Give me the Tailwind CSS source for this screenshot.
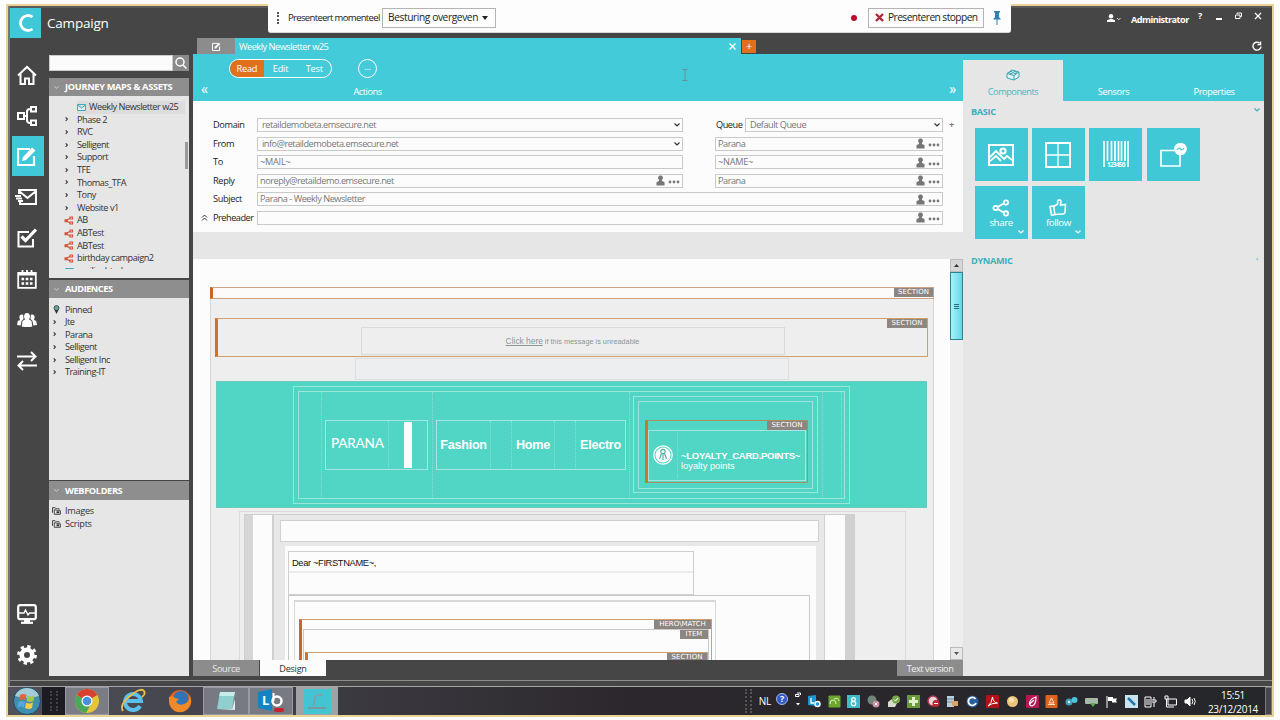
<!DOCTYPE html>
<html lang="en">
<head>
    <meta charset="UTF-8">
    <meta name="viewport" content="width=device-width, initial-scale=1.0">
    <title>Campaign</title>
    <script src="https://cdn.jsdelivr.net/npm/@tailwindcss/browser@4"></script>
</head>
<body class="relative w-[1280px] h-[720px] overflow-hidden bg-[#fdfdfd] pl-[6px] pt-[4px] font-['Open_Sans',sans-serif] text-[9.200px] tracking-[-0.480px] leading-none text-[#333] whitespace-nowrap">

    <!-- Shared icons -->
    <svg class="hidden">
        <symbol id="share" viewBox="0 0 20 20"><g fill="none" stroke="currentColor" stroke-width="2"><path d="M6 9 13 5M6 11l7 4"/><circle cx="4" cy="10" r="2.400"/><circle cx="15.500" cy="4" r="2.400"/><circle cx="15.500" cy="16" r="2.400"/></g></symbol>
        <symbol id="branch" viewBox="0 0 20 20"><path d="M0 7h7v7H0zM11 1h8v7h-8zM11 12h8v7h-8z" fill="currentColor"/><path d="M5 9l8-4M5 11l8 5" stroke="currentColor" stroke-width="2.500"/><path d="M13.500 3.500h3v2h-3zM13.500 14.500h3v2h-3z" fill="#e6e6e6"/></symbol>
        <symbol id="pencil" viewBox="0 0 20 20"><path d="M13 3H1v16h16V10" fill="none" stroke="currentColor" stroke-width="2.200"/><path d="M5 15l1-4L15 1.500l3.500 3L9 14z" fill="currentColor"/></symbol>
        <symbol id="person" viewBox="0 0 10 11"><path d="M5 0a2.600 2.600 0 0 1 1.800 4.600l-.3 1.200L9.500 7.500V11H.5V7.500L3.500 5.800 3.200 4.600A2.600 2.600 0 0 1 5 0z" fill="currentColor"/></symbol>
        <symbol id="dots" viewBox="0 0 12 4"><g fill="currentColor"><circle cx="2" cy="2" r="1.400"/><circle cx="6" cy="2" r="1.400"/><circle cx="10" cy="2" r="1.400"/></g></symbol>
        <symbol id="down" viewBox="0 0 8 6"><path d="M1.500 1.500 4 4l2.500-2.500" fill="none" stroke="currentColor" stroke-width="1.200"/></symbol>
        <symbol id="right" viewBox="0 0 6 8"><path d="M1.500 1.500 3.500 3.500 1.500 5.500" fill="none" stroke="currentColor" stroke-width="1.200"/></symbol>
        <symbol id="folder" viewBox="0 0 10 9"><path d="M.5 6.500V.8h3l1 1.200h3.500v1M2.500 8.200V3.200h2.200l.8 1H9.300v4z" fill="none" stroke="currentColor"/><path d="M5 5h3v2H5z" fill="currentColor"/></symbol>
    </svg>

    <!-- Shared screen -->
    <div class="w-[1268px] h-[713px] border-2 border-[#e8d494] flex flex-col overflow-hidden">

        <!-- Application window -->
        <div class="h-[680px] bg-[#464646] border-l-2 border-[#74757c] flex flex-col">
            <!-- Title bar -->
            <div class="h-8 flex shrink-0 border-t-2 border-[#5c5a58]">
                <div class="w-[31px] h-[30px] bg-[#40c8d8] flex items-center justify-center">
                    <svg class="w-[18px] h-[20px]" viewBox="0 0 18 20" fill="none" stroke="#fff" stroke-width="2.800"><path d="M15.500 4A7.500 7.500 0 1 0 15.500 16"/></svg>
                </div>
                <div class="w-[200px] pl-[6px] pt-[9px] text-[13.500px] tracking-[-0.200px] text-white">Campaign</div>
                <div class="ml-auto flex text-white">
                    <svg class="w-[14px] h-[8px] mt-[6px]" viewBox="0 0 14 8" fill="#fff"><circle cx="4" cy="2.300" r="2.200"/><path d="M0 8V6.300L3 5h2l3 1.300V8z"/><path d="M10 4l1.800 1.800L13.500 4" fill="none" stroke="#ddd"/></svg>
                    <div class="ml-[10px] mt-[7px] w-[67px] text-[9.200px] tracking-[-0.550px] font-bold">Administrator</div>
                    <div class="mt-[3px] w-[18px] text-[9px] font-bold">?</div>
                    <div class="w-[6px] h-[1.500px] bg-white mt-[10px]"></div>
                    <svg class="w-[7px] h-[7px] ml-[13px] mt-[4px]" viewBox="0 0 7 7" fill="none" stroke="#fff"><path d="M2 2V1h4.500v3.500H5M.5 3H5v3.500H.5z"/></svg>
                    <svg class="w-[8px] h-[8px] ml-[12px] mr-[10px] mt-[4px]" viewBox="0 0 8 8" fill="none" stroke="#fff" stroke-width="1.300"><path d="m1 1 6 6M7 1 1 7"/></svg>
                </div>
            </div>

            <div class="flex h-[638px] shrink-0">
                <!-- Module bar -->
                <div class="w-[39px] flex flex-col items-center text-white pr-[6px]">
                    <div class="h-[41px] mt-[16px] flex items-center"><svg class="w-5 h-5" viewBox="0 0 20 20" fill="none" stroke="#fff" stroke-width="2"><path d="M1 10.500 10 2l9 8.500M3.500 9v10H8v-5.500h4V19h4.500V9"/></svg></div>
                    <div class="h-[41px] flex items-center"><svg class="w-5 h-5" viewBox="0 0 20 20" fill="none" stroke="#fff" stroke-width="2"><path d="M1 7h6v6H1zM14 1h5v4.500h-5zM14 14.500h5V19h-5zM7 10h3M14 3h-1q-3 0-3 3v8q0 3 3 3h1"/></svg></div>
                    <div class="h-[40px] w-[32px] self-start ml-[2px] pr-[3px] bg-[#40c8d8] flex items-center justify-center"><svg class="w-5 h-5"><use href="#pencil"/></svg></div>
                    <div class="h-[41px] flex items-center"><svg class="w-[23px] h-[18px] -ml-[3px]" viewBox="0 0 23 18" fill="none" stroke="#fff" stroke-width="1.900"><path d="M5 6V2h17v14H6v-2M5 3l8.500 7L22 3M1 8h6M2 10.500h6M4 13h5"/></svg></div>
                    <div class="h-[41px] flex items-center"><svg class="w-5 h-5" viewBox="0 0 20 20" fill="none" stroke="#fff"><path d="M12 4H1.500v14.500h14.500V11" stroke-width="2"/><path d="m4.500 8.500 4 4L19 1.500" stroke-width="3.200"/></svg></div>
                    <div class="h-[41px] flex items-center"><svg class="w-5 h-5" viewBox="0 0 20 20" fill="none" stroke="#fff" stroke-width="1.800"><path d="M1.200 4h17.600v14.800H1.200z"/><path d="M1 5.500h18M5.500 1v4M10 1v4M14.500 1v4"/><path d="M4.500 10h11M4.500 14.500h11" stroke-dasharray="2.600 1.600" stroke-width="2.600"/></svg></div>
                    <div class="h-[41px] flex items-center"><svg class="w-5 h-[14px]" viewBox="0 0 20 14" fill="#fff"><path d="M10 0q3 0 3 4l-1 2.500 2.500 1.500.8 5.500q-5 1-10.600 0L5.500 8 8 6.500 7 4q0-4 3-4zM4.500 1.500Q6 1 6.300 2.500L6.500 6 4.500 8l-.8 4.500L0 12l.8-4L3 7 2.300 4q0-2.500 2.200-2.500zM15.500 1.500Q14 1 13.700 2.500L13.500 6l2 2 .8 4.500L20 12l-.8-4L17 7l.7-3q0-2.500-2.200-2.500z"/></svg></div>
                    <div class="h-[41px] flex items-center"><svg class="w-5 h-5" viewBox="0 0 20 20" fill="none" stroke="#fff" stroke-width="2"><path d="M0 5.500h18.500M14 1l4.500 4.500L14 10M20 14.500H1.500M6 10l-4.500 4.500L6 19"/></svg></div>
                    <div class="h-[41px] mt-[212px] flex items-center"><svg class="w-5 h-5" viewBox="0 0 20 20" fill="none" stroke="#fff" stroke-width="2.200"><rect x="1.200" y="1.200" width="17.600" height="14" rx="2"/><path d="M2 9h5l1.500-3 2.500 5 1.500-2H18" stroke-width="1.400"/><path d="M10 15v3" stroke-width="6"/><path d="M4 18.800h12"/></svg></div>
                    <div class="h-[41px] flex items-center"><svg class="w-5 h-5" viewBox="0 0 20 20" fill="none" stroke="#fff"><circle cx="10" cy="10" r="5.300" stroke-width="4.600"/><circle cx="10" cy="10" r="8.500" stroke-width="2.800" stroke-dasharray="3.300 3.376"/></svg></div>
                </div>

                <!-- Explorer -->
                <div class="w-[140px] flex flex-col pt-[17px]">
                    <div class="flex h-4 shrink-0">
                        <div class="w-[124px] bg-[#fbfbfb] border border-[#ccc]"></div>
                        <div class="w-4 bg-[#8a8a8a] flex items-center justify-center"><svg class="w-3 h-3" viewBox="0 0 12 12" fill="none" stroke="#fff" stroke-width="1.500"><circle cx="5" cy="5" r="4"/><path d="m8 8 3.500 3.500"/></svg></div>
                    </div>
                    <div class="mt-[7px] h-[18px] shrink-0 bg-[#8e8e8e] flex items-center pl-[4px] gap-[5px] text-white font-bold text-[9.200px] tracking-[-0.300px]"><svg class="w-[7px] h-[5px] opacity-60"><use href="#down"/></svg>JOURNEY MAPS &amp; ASSETS</div>
                    <div class="h-[182px] shrink-0 bg-[#e6e6e6] flex pt-[5px]">
                        <div class="w-[136px] h-[168px] overflow-hidden leading-[12.600px]">
                            <div class="flex items-center h-[12.600px] ml-[28px] bg-[#dcdcdc]"><svg class="w-[9px] h-[7px] mr-[3px]" viewBox="0 0 9 7" fill="#d7f1f5" stroke="#40a8c8"><path d="M.5.5h8v6h-8zM.5 1l4 3 4-3"/></svg>Weekly Newsletter w25</div>
                            <div class="flex items-center pl-[15px]"><svg class="w-[6px] h-[7px] mr-[7px]"><use href="#right"/></svg>Phase 2</div>
                            <div class="flex items-center pl-[15px]"><svg class="w-[6px] h-[7px] mr-[7px]"><use href="#right"/></svg>RVC</div>
                            <div class="flex items-center pl-[15px]"><svg class="w-[6px] h-[7px] mr-[7px]"><use href="#right"/></svg>Selligent</div>
                            <div class="flex items-center pl-[15px]"><svg class="w-[6px] h-[7px] mr-[7px]"><use href="#right"/></svg>Support</div>
                            <div class="flex items-center pl-[15px]"><svg class="w-[6px] h-[7px] mr-[7px]"><use href="#right"/></svg>TFE</div>
                            <div class="flex items-center pl-[15px]"><svg class="w-[6px] h-[7px] mr-[7px]"><use href="#right"/></svg>Thomas_TFA</div>
                            <div class="flex items-center pl-[15px]"><svg class="w-[6px] h-[7px] mr-[7px]"><use href="#right"/></svg>Tony</div>
                            <div class="flex items-center pl-[15px]"><svg class="w-[6px] h-[7px] mr-[7px]"><use href="#right"/></svg>Website v1</div>
                            <div class="flex items-center pl-[15px]"><svg class="w-[10px] h-[9px] mr-[3px] text-[#d0553a]"><use href="#branch"/></svg>AB</div>
                            <div class="flex items-center pl-[15px]"><svg class="w-[10px] h-[9px] mr-[3px] text-[#d0553a]"><use href="#branch"/></svg>ABTest</div>
                            <div class="flex items-center pl-[15px]"><svg class="w-[10px] h-[9px] mr-[3px] text-[#d0553a]"><use href="#branch"/></svg>ABTest</div>
                            <div class="flex items-center pl-[15px]"><svg class="w-[10px] h-[9px] mr-[3px] text-[#d0553a]"><use href="#branch"/></svg>birthday campaign2</div>
                            <div class="flex items-center pl-[16px]"><svg class="w-[9px] h-[7px] mr-[3px]" viewBox="0 0 9 7" fill="none" stroke="#40a8c8"><path d="M.5.5h8v6h-8z"/></svg>mailinghtml</div>
                        </div>
                        <div class="w-[3px] h-[27px] mt-[41px] bg-[#9a9a9a]"></div>
                    </div>
                    <div class="mt-[2px] h-[18px] shrink-0 bg-[#8e8e8e] flex items-center pl-[4px] gap-[5px] text-white font-bold text-[9.200px]"><svg class="w-[7px] h-[5px] opacity-60"><use href="#down"/></svg>AUDIENCES</div>
                    <div class="h-[182px] shrink-0 bg-[#e6e6e6] pt-[5.500px] pl-[3px] leading-[12.600px]">
                        <div class="flex items-center"><svg class="w-[9px] h-[9px] mr-[4px]" viewBox="0 0 9 9"><circle cx="4.500" cy="3" r="2.500" fill="#6b9d93" stroke="#3c5f58"/><path d="M2.500 5h4L4.500 9z" fill="#333"/></svg>Pinned</div>
                        <div class="flex items-center"><svg class="w-[6px] h-[7px] mr-[7px]"><use href="#right"/></svg>Jte</div>
                        <div class="flex items-center"><svg class="w-[6px] h-[7px] mr-[7px]"><use href="#right"/></svg>Parana</div>
                        <div class="flex items-center"><svg class="w-[6px] h-[7px] mr-[7px]"><use href="#right"/></svg>Selligent</div>
                        <div class="flex items-center"><svg class="w-[6px] h-[7px] mr-[7px]"><use href="#right"/></svg>Selligent Inc</div>
                        <div class="flex items-center"><svg class="w-[6px] h-[7px] mr-[7px]"><use href="#right"/></svg>Training-IT</div>
                    </div>
                    <div class="mt-[1px] h-[19px] shrink-0 bg-[#8e8e8e] flex items-center pl-[4px] gap-[5px] text-white font-bold text-[9.200px] tracking-[-0.350px]"><svg class="w-[7px] h-[5px] opacity-60"><use href="#down"/></svg>WEBFOLDERS</div>
                    <div class="flex-1 bg-[#e6e6e6] pt-[5px] pl-[3px] leading-[12.600px] tracking-[-0.300px]">
                        <div class="flex items-center"><svg class="w-[9px] h-[8px] mr-[4px]"><use href="#folder"/></svg>Images</div>
                        <div class="flex items-center"><svg class="w-[9px] h-[8px] mr-[4px]"><use href="#folder"/></svg>Scripts</div>
                    </div>
                </div>

                <!-- Workspace -->
                <div class="ml-[4px] w-[1071px] flex flex-col">
                    <!-- Document tabs -->
                    <div class="h-4 flex shrink-0 text-white">
                        <div class="w-[38px] ml-[4px] bg-[#8c8c8c] flex items-center justify-center"><svg class="w-[9px] h-[9px]"><use href="#pencil"/></svg></div>
                        <div class="w-[506px] bg-[#44cbd9] flex items-center justify-between pl-[4px] pr-[5px] pt-px">Weekly Newsletter w25
                            <svg class="w-[7px] h-[7px]" viewBox="0 0 7 7" stroke="#fff" stroke-width="1.200"><path d="m.5.5 6 6M6.500.5l-6 6"/></svg>
                        </div>
                        <div class="ml-[1px] mt-[2px] w-[14px] h-[13px] bg-[#e0701c] text-center text-[11px] leading-[12px]">+</div>
                        <svg class="w-[10px] h-[10px] ml-auto mr-[2px] mt-[3px]" viewBox="0 0 10 10" fill="none" stroke="#fff" stroke-width="1.400"><path d="M9 5.500A4 4 0 1 1 7.500 2"/><path d="M8.500.5v3h-3"/></svg>
                    </div>

                    <div class="flex flex-1">
                        <!-- Editor -->
                        <div class="w-[770px] flex flex-col">
                            <div class="h-[47px] bg-[#44cbd9] text-white flex shrink-0 tracking-[-0.200px]">
                                <div class="w-[36px] pt-[27px] pl-[8px] text-[14px] leading-[16px]">«</div>
                                <div class="mt-[5px] w-[103px] h-[19px] rounded-full border-[1.500px] border-white flex overflow-hidden items-center text-center">
                                    <div class="w-[34px] h-full bg-[#e0701c] leading-[18px]">Read</div>
                                    <div class="w-[34px] leading-[18px]">Edit</div>
                                    <div class="w-[34px] leading-[18px]">Test</div>
                                </div>
                                <div class="w-[71px] pt-[5px] flex flex-col items-center">
                                    <div class="w-[19px] h-[19px] rounded-full border-[1.500px] border-white text-center leading-[13px]">...</div>
                                    <div class="mt-[9px] tracking-[-0.450px]">Actions</div>
                                </div>
                                <!-- Text cursor -->
                                <svg class="w-[6px] h-[12px] ml-[279px] mt-[15px]" viewBox="0 0 6 12" fill="none" stroke="#6a9097"><path d="M.5.500h5M.5 11.500h5M3 .5v11"/></svg>
                                <div class="ml-auto pt-[27px] pr-[7px] text-[14px] leading-[16px]">»</div>
                            </div>

                            <!-- Mail header fields -->
                            <div class="h-[131px] bg-[#fcfcfc] pt-[17px] pl-[20px] flex flex-col gap-[4.500px] shrink-0 text-[#777]">
                                <div class="flex h-[14px] items-center">
                                    <div class="w-[44px] tracking-[-0.350px] text-[#222]">Domain</div>
                                    <div class="w-[426px] h-full border border-[#c9c9c9] flex items-center justify-between pl-[4px] pr-[1px]">retaildemobeta.emsecure.net<svg class="w-[8px] h-[6px] text-[#333]"><use href="#down"/></svg></div>
                                    <div class="ml-[33px] w-[29px] text-[#222]">Queue</div>
                                    <div class="w-[198px] h-full border border-[#c9c9c9] flex items-center justify-between pl-[4px] pr-[1px]">Default Queue<svg class="w-[8px] h-[6px] text-[#333]"><use href="#down"/></svg></div>
                                    <div class="ml-[6px] font-bold">+</div>
                                </div>
                                <div class="flex h-[14px] items-center">
                                    <div class="w-[44px] tracking-[-0.350px] text-[#222]">From</div>
                                    <div class="w-[426px] h-full border border-[#c9c9c9] flex items-center justify-between pl-[4px] pr-[1px]">info@retaildemobeta.emsecure.net<svg class="w-[8px] h-[6px] text-[#333]"><use href="#down"/></svg></div>
                                    <div class="ml-[32px] w-[228px] h-full border border-[#c9c9c9] flex items-center pl-[2px] pr-[2px]">Parana<svg class="w-[9px] h-[11px] ml-auto mr-[3px]"><use href="#person"/></svg><svg class="w-[12px] h-[4px] mt-[3px]"><use href="#dots"/></svg></div>
                                </div>
                                <div class="flex h-[14px] items-center">
                                    <div class="w-[44px] tracking-[-0.350px] text-[#222]">To</div>
                                    <div class="w-[426px] h-full border border-[#c9c9c9] flex items-center pl-[2px] tracking-[-0.250px]">~MAIL~</div>
                                    <div class="ml-[32px] w-[228px] h-full border border-[#c9c9c9] flex items-center pl-[2px] pr-[2px] tracking-[-0.250px]">~NAME~<svg class="w-[9px] h-[11px] ml-auto mr-[3px]"><use href="#person"/></svg><svg class="w-[12px] h-[4px] mt-[3px]"><use href="#dots"/></svg></div>
                                </div>
                                <div class="flex h-[14px] items-center">
                                    <div class="w-[44px] tracking-[-0.350px] text-[#222]">Reply</div>
                                    <div class="w-[426px] h-full border border-[#c9c9c9] flex items-center pl-[2px] pr-[2px]">noreply@retaildemo.emsecure.net<svg class="w-[9px] h-[11px] ml-auto mr-[3px]"><use href="#person"/></svg><svg class="w-[12px] h-[4px] mt-[3px]"><use href="#dots"/></svg></div>
                                    <div class="ml-[32px] w-[228px] h-full border border-[#c9c9c9] flex items-center pl-[2px] pr-[2px]">Parana<svg class="w-[9px] h-[11px] ml-auto mr-[3px]"><use href="#person"/></svg><svg class="w-[12px] h-[4px] mt-[3px]"><use href="#dots"/></svg></div>
                                </div>
                                <div class="flex h-[14px] items-center">
                                    <div class="w-[44px] tracking-[-0.350px] text-[#222]">Subject</div>
                                    <div class="w-[686px] h-full border border-[#c9c9c9] flex items-center pl-[2px] pr-[2px]">Parana - Weekly Newsletter<svg class="w-[9px] h-[11px] ml-auto mr-[3px]"><use href="#person"/></svg><svg class="w-[12px] h-[4px] mt-[3px]"><use href="#dots"/></svg></div>
                                </div>
                                <div class="flex h-[14px] items-center -ml-[12px]">
                                    <svg class="w-[7px] h-[7px] mr-[5px]" viewBox="0 0 7 7" fill="none" stroke="#333"><path d="M1 3.500 3.500 1 6 3.500M1 6.500 3.500 4 6 6.500"/></svg>
                                    <div class="w-[44px] text-[#222]">Preheader</div>
                                    <div class="w-[686px] h-full border border-[#c9c9c9] flex items-center pl-[2px] pr-[2px]"><svg class="w-[9px] h-[11px] ml-auto mr-[3px]"><use href="#person"/></svg><svg class="w-[12px] h-[4px] mt-[3px]"><use href="#dots"/></svg></div>
                                </div>
                            </div>
                            <div class="h-[27px] bg-[#e6e6e6] shrink-0"></div>

                            <!-- Message canvas -->
                            <div class="flex h-[401px] shrink-0 bg-[#fcfcfc]">
                                <div class="w-[757px] overflow-hidden pt-[28px] pl-[17px] font-['Liberation_Sans',sans-serif] tracking-normal">
                                    <div class="w-[724px] h-[400px] bg-[#eee] border-x border-[#d6d6d6]">
                                        <div class="-mx-px h-[12px] bg-[#fdfbfa] border border-l-[3px] border-[#cfa283] border-l-[#c8681f] flex justify-end">
                                            <div class="w-[39px] h-[9px] bg-[#8c8580] text-white text-[7px] leading-[9px] text-center font-['DejaVu_Sans',sans-serif]">SECTION</div>
                                        </div>
                                        <div class="mt-[19px] ml-[4px] w-[713px] h-[39px] border border-l-[3px] border-[#cfa06a] border-l-[#d2702a] relative flex justify-center">
                                            <div class="mt-[8px] w-[424px] h-[28px] border border-[#d9dada] text-[#8c9598] text-[7.300px] leading-[27px] text-center"><span class="underline text-[8.400px]">Click here</span> if this message is unreadable</div>
                                            <div class="absolute right-0 top-0 w-[40px] h-[9px] bg-[#8c8580] text-white text-[7px] leading-[9px] text-center font-['DejaVu_Sans',sans-serif]">SECTION</div>
                                        </div>
                                        <div class="mt-[1px] ml-[144px] w-[434px] h-[22px] border border-[#dddede] bg-[#eceef0]"></div>

                                        <!-- Message banner -->
                                        <div class="mt-[1px] ml-[5px] w-[711px] h-[127px] bg-[#51d5c4] border border-[#6fc8bd] pt-[4px] pl-[76px] text-white">
                                            <div class="w-[557px] h-[118px] border border-[#9ce5db] p-[4px]">
                                                <div class="w-[547px] h-[108px] border border-[#9ce5db] pl-[22px] flex">
                                                    <div class="w-[112px] h-full border-x border-dotted border-[#8fdcd2] pt-[28px] pl-[3px]">
                                                        <div class="w-[103px] h-[50px] border border-[#a6e6de] flex">
                                                            <div class="w-[63px] pl-[5px] border-r border-dotted border-[#8fdcd2] leading-[45px] text-[13.500px] tracking-[-0.200px] font-medium font-['Lato',sans-serif]">PARANA</div>
                                                            <div class="ml-[15px] w-[8px] my-[1px] bg-[#fbfbfb]"></div>
                                                        </div>
                                                    </div>
                                                    <div class="w-[197px] h-full border-r border-dotted border-[#8fdcd2] pt-[28px] pl-[3px]">
                                                        <div class="w-[190px] h-[50px] border border-[#a6e6de] flex text-[12.600px] leading-[49px] tracking-[-0.250px] font-bold text-center">
                                                            <div class="w-[54px] border-r border-dotted border-[#8fdcd2]">Fashion</div>
                                                            <div class="w-[21px] border-r border-dotted border-[#8fdcd2]"></div>
                                                            <div class="w-[43px] border-r border-dotted border-[#8fdcd2]">Home</div>
                                                            <div class="w-[21px] border-r border-dotted border-[#8fdcd2]"></div>
                                                            <div class="w-[49px]">Electro</div>
                                                        </div>
                                                    </div>
                                                    <div class="mt-[4px] ml-[3px] w-[185px] h-[97px] border border-[#9ce5db] p-[4px]">
                                                        <div class="w-[175px] h-[88px] border border-[#9ce5db] pt-[18px] pl-[6px]">
                                                            <div class="w-[163px] h-[63px] border border-l-[3px] border-[#a9905c] border-l-[#c8752e]">
                                                                <div class="ml-auto w-[40px] h-[9px] bg-[#8c8580] text-white text-[7px] leading-[9px] text-center font-['DejaVu_Sans',sans-serif]">SECTION</div>
                                                                <div class="w-[158px] h-[51px] border border-[#a6e6de] flex">
                                                                    <div class="w-[29px] my-[2px] border-r border-dotted border-[#8fdcd2] pt-[12px] pl-[4px]"><svg class="w-5 h-5" viewBox="0 0 20 20" fill="none" stroke="#fff"><circle cx="10" cy="10" r="9.200" stroke-width="1.300"/><circle cx="10" cy="10" r="7.500" fill="#fff" stroke="none"/><g stroke="#51b5a8" stroke-width="1.200"><circle cx="10" cy="6.500" r="2.200"/><path d="M8.500 8.500 6.500 14M11.500 8.500l2 5.500M10 9v6"/></g></svg></div>
                                                                    <div class="pl-[3px] pt-[19px]">
                                                                        <div class="text-[9.500px] leading-[11px] tracking-[-0.260px] font-bold">~LOYALTY_CARD.POINTS~</div>
                                                                        <div class="text-[9.300px] leading-[11px]">loyalty points</div>
                                                                    </div>
                                                                </div>
                                                            </div>
                                                        </div>
                                                    </div>
                                                    <div class="ml-[4px] w-[20px] border-x border-dotted border-[#8fdcd2]"></div>
                                                </div>
                                            </div>
                                        </div>

                                        <!-- Message body -->
                                        <div class="mt-[3px] ml-[28px] w-[667px] h-[200px] border border-[#dcdcdc] pt-[2px] pl-[4px]">
                                            <div class="w-[611px] h-[200px] border border-[#cfcfcf] flex">
                                                <div class="w-[8px] bg-[#d6d6d6]"></div>
                                                <div class="w-[20px] bg-[#fcfcfc] border-r border-[#d0d0d0]"></div>
                                                <div class="w-[552px] bg-[#e8e8e8] border-x border-[#d0d0d0] pt-[5px] pl-[6px] pr-[5px] text-[#111]">
                                                    <div class="h-[22px] bg-[#fcfcfc] border border-[#d0d0d0]"></div>
                                                    <div class="mt-[4px] ml-[5px] w-[531px] h-[150px] bg-[#fcfcfc] pt-[5px] pl-[3px]">
                                                        <div class="w-[406px] h-[44px] border border-[#cfcfcf]">
                                                            <div class="h-[21px] border-b-2 border-[#ececec] pl-[3px] text-[9.300px] leading-[22px] tracking-[-0.350px]">Dear ~FIRSTNAME~,</div>
                                                        </div>
                                                        <div class="w-[522px] h-[100px] border border-[#c8c8c8] pt-[4px] pl-[5px]">
                                                            <div class="w-[422px] h-[90px] border border-[#d8d8d8] border-t-2 pt-[17px] pl-[4px]">
                                                                <div class="w-[413px] h-[80px] border border-l-[3px] border-[#cfa06a] border-l-[#d2602a]">
                                                                    <div class="ml-auto w-[57px] h-[9px] bg-[#8c8580] text-white text-[7px] leading-[9px] text-center font-['DejaVu_Sans',sans-serif]">HERO\MATCH</div>
                                                                    <div class="ml-px mr-[2px] h-[60px] border-t border-x border-[#c8c8c8]">
                                                                        <div class="ml-auto w-[28px] h-[9px] bg-[#8c8580] text-white text-[7px] leading-[9px] text-center font-['DejaVu_Sans',sans-serif]">ITEM</div>
                                                                        <div class="mt-[13px] ml-[1px] h-[30px] border border-l-[3px] border-[#cfa06a] border-l-[#d2702a]">
                                                                            <div class="ml-auto w-[40px] h-[9px] bg-[#8c8580] text-white text-[7px] leading-[9px] text-center font-['DejaVu_Sans',sans-serif]">SECTION</div>
                                                                        </div>
                                                                    </div>
                                                                </div>
                                                            </div>
                                                        </div>
                                                    </div>
                                                </div>
                                                <div class="w-[20px] bg-[#fcfcfc]"></div>
                                                <div class="flex-1 bg-[#d0d0d0]"></div>
                                            </div>
                                        </div>
                                    </div>
                                </div>
                                <!-- Scrollbar -->
                                <div class="w-[13px] bg-[#eee] flex flex-col">
                                    <div class="h-[13px] bg-[#d6d6d6] border border-[#bbb] flex items-center justify-center"><svg class="w-[5px] h-[3px]" viewBox="0 0 5 3"><path d="M0 3 2.500 0 5 3z" fill="#333"/></svg></div>
                                    <div class="h-[68px] bg-linear-to-r from-[#a8f0f8] to-[#5fd8ea] border border-[#35808e] flex flex-col items-center justify-center gap-px"><div class="w-[5px] h-px bg-[#26707c]"></div><div class="w-[5px] h-px bg-[#26707c]"></div><div class="w-[5px] h-px bg-[#26707c]"></div></div>
                                    <div class="mt-auto h-[13px] bg-[#e8e8e8] border border-[#bbb] flex items-center justify-center"><svg class="w-[5px] h-[3px]" viewBox="0 0 5 3"><path d="M0 0h5L2.500 3z" fill="#555"/></svg></div>
                                </div>
                            </div>

                            <!-- View tabs -->
                            <div class="h-4 flex shrink-0 text-center leading-[18px] tracking-[-0.300px]">
                                <div class="w-[66px] bg-[#8c8c8c] text-[#e8e8e8]">Source</div>
                                <div class="ml-px w-[66px] bg-[#fcfcfc]">Design</div>
                                <div class="ml-auto w-[66px] bg-[#8c8c8c] text-[#f0f0f0] tracking-[-0.450px]">Text version</div>
                            </div>
                        </div>

                        <!-- Component panel -->
                        <div class="w-[301px] bg-[#e6e6e6] tracking-[-0.350px]">
                            <div class="h-[47px] bg-[#44cbd9] flex pt-[6px] text-white text-center">
                                <div class="w-[100px] bg-[#e6e6e6] text-[#4ab5be] flex flex-col items-center pt-[9px]">
                                    <svg class="w-[14px] h-[12px]" viewBox="0 0 14 12" fill="#dff2f4" stroke="#35a5b0"><path d="M1 4.500 6 1l7 2v5l-5 3-7-2zM1 4.500l7 2 5-3.500M8 6.500V11"/><ellipse cx="5" cy="3.500" rx="1.600" ry="1"/><ellipse cx="9" cy="3.500" rx="1.600" ry="1"/></svg>
                                    <div class="mt-[6px] tracking-[-0.550px]">
                                        <span class="tracking-[-0.450px]">Components</span>
                                    </div>
                                </div>
                                <div class="w-[101px] pt-[27px]">Sensors</div>
                                <div class="w-[100px] pt-[27px]">Properties</div>
                            </div>
                            <div class="flex h-[27px] pt-[6px] pl-[8px] pr-[3px] justify-between text-[#3cb0bb] font-bold">BASIC<svg class="w-[8px] h-[6px]"><use href="#down"/></svg></div>
                            <div class="grid grid-cols-[repeat(4,53px)] gap-x-[4.400px] gap-y-[5px] pl-[11.600px] text-white">
                                <div class="h-[53px] bg-[#40c8d6] flex items-center justify-center"><svg class="w-[26px] h-[22px]" viewBox="0 0 26 22" fill="none" stroke="#fff" stroke-width="2"><path d="M1 1h24v20H1z"/><path d="m2 13 6-6 8 8 3-3 5 4M2 17l6-5 5 5" stroke-width="1.800"/><circle cx="15" cy="7" r="2.600"/></svg></div>
                                <div class="h-[53px] bg-[#40c8d6] flex items-center justify-center"><svg class="w-[26px] h-[26px]" viewBox="0 0 26 26" fill="none" stroke="#fff"><path d="M1 1h24v24H1z" stroke-width="2"/><path d="M13 1v24M1 13h24" stroke-width="1.300"/></svg></div>
                                <div class="h-[53px] bg-[#40c8d6] flex flex-col items-center justify-center"><svg class="w-[26px] h-[27px]" viewBox="0 0 26 27"><path d="M1 0v26M25 0v26" stroke="#fff" stroke-width="1.600"/><path d="M4.500 0v20M8.500 0v20M12 0v20M15.500 0v20M18.500 0v20M22 0v20" stroke="#fff" stroke-width="1.700"/><text x="13" y="26" fill="#fff" font-size="6.500" font-weight="bold" text-anchor="middle" textLength="18" font-family="Open Sans">123456</text></svg></div>
                                <div class="h-[53px] bg-[#40c8d6] flex items-center justify-center"><svg class="w-[27px] h-[26px]" viewBox="0 0 27 26" fill="none" stroke="#fff"><path d="M15 8.500H1v15.500h19V13" stroke-width="1.700"/><circle cx="20.500" cy="7" r="6.300" fill="#fff" stroke="none"/><path d="M17 8q1.800-3 3.500-1t3.500-1" stroke="#40c8d6" stroke-width="1.300"/></svg></div>
                                <div class="h-[53px] bg-[#40c8d6] relative flex flex-col items-center pt-[13px]"><svg class="w-[18px] h-[18px]"><use href="#share"/></svg><div class="mt-[1px] text-[9.800px] tracking-[-0.450px]">share</div><svg class="absolute right-[3px] bottom-[4px] w-[8px] h-[6px]"><use href="#down"/></svg></div>
                                <div class="h-[53px] bg-[#40c8d6] relative flex flex-col items-center pt-[13px]"><svg class="w-[18px] h-[18px]" viewBox="0 0 18 18" fill="none" stroke="#fff" stroke-width="1.600"><path d="M1 7.500 4.500 7 6 15.500 2.500 16zM5 7.500 8.500 5 9 1.500q2-1.500 3 .5L11.500 6l5-.5-.5 8q-.5 1.500-2 1.500l-8 .5"/></svg><div class="mt-[1px] text-[9.800px] tracking-[-0.450px]">follow</div><svg class="absolute right-[3px] bottom-[4px] w-[8px] h-[6px]"><use href="#down"/></svg></div>
                            </div>
                            <div class="flex mt-[17px] pl-[8px] pr-[5px] justify-between text-[#3cb0bb] font-bold">DYNAMIC<svg class="w-[4px] h-[7px] -scale-x-100"><use href="#right"/></svg></div>
                        </div>
                    </div>
                </div>
            </div>
            <div class="mt-[4px] h-px bg-[#8d8d8d]"></div>
        </div>

        <!-- Taskbar -->
        <div class="h-[29px] border-t border-[#a5a5a5] bg-linear-to-r from-[#50515a] via-[#2b272c] to-[#26272b] flex items-center text-white">
            <svg class="w-[30px] h-[28px] ml-[4px]" viewBox="0 0 30 28"><circle cx="15" cy="14" r="13.500" fill="#3f8fae" stroke="#1e4c6c"/><path d="M3 9a13 13 0 0 1 24 0q-12 4-24 0" fill="#a4cbd8"/><path d="M8 8q3-2 6.500 0l-1 5.500q-3-2-6.500 0z" fill="#e0663a"/><path d="M15.500 8.500q3 2 7 0l-1 5.500q-3 2-7 0z" fill="#9ccb4e"/><path d="M6.500 15q3-2 6.500 0l-1 5.500q-3-2-6.500 0z" fill="#4fa8e0"/><path d="M14 15.500q3 2 7 0l-1 5.500q-3 2-7 0z" fill="#f5cd48"/></svg>
            <div class="w-[23px] h-full bg-[#1c1c22] flex items-center justify-center"><div class="w-[8px] h-[20px] border-x-2 border-dotted border-[#444]"></div></div>
            <div class="w-[44px] h-full bg-[#7b7c84] border border-[#9a9aa2] flex items-center justify-center">
                <svg class="w-6 h-6" viewBox="0 0 24 24"><circle cx="12" cy="12" r="12" fill="#e8c43a"/><path d="M12 12 1.600 6A12 12 0 0 1 22.400 6z" fill="#d8402f"/><path d="M12 12 1.600 6A12 12 0 0 0 11 24l5-9z" fill="#4aa85a"/><circle cx="12" cy="12" r="5.500" fill="#fff"/><circle cx="12" cy="12" r="4.300" fill="#4b8fdc"/></svg>
            </div>
            <div class="w-[48px] flex justify-center"><svg class="w-[26px] h-[26px]" viewBox="0 0 26 26" fill="none"><path d="M20 18A8 8 0 1 1 21 13H6" stroke="#5cc0ec" stroke-width="4"/><path d="M3 23Q-1 17 10 8T24 3Q26 6 22 9" stroke="#e8c048" stroke-width="1.800"/></svg></div>
            <div class="w-[46px] flex justify-center"><svg class="w-6 h-6" viewBox="0 0 24 24"><circle cx="12" cy="12" r="11" fill="#e0601e"/><circle cx="13" cy="9.500" r="7.500" fill="#2f73b8"/><path d="M1 8q4-2 6 1l4 1-3 3q3 4 8 2 7-3 5-10 4 6 1 12-4 7-12 6Q0 21 1 8z" fill="#ee8a28"/></svg></div>
            <div class="w-[46px] h-full bg-[#777a82] border border-[#9a9aa2] flex items-center justify-center"><svg class="w-[22px] h-[22px]" viewBox="0 0 22 22"><path d="M5 2h15l-3 17H2z" fill="#8fd0cf"/><path d="M5 2h15l-1 4H4.300z" fill="#c6ecea"/><path d="m2 19 15 0 3-10 0 11z" fill="#dfe9e8"/></svg></div>
            <div class="w-[44px] h-full bg-[#777a82] border border-[#9a9aa2] flex items-center justify-center"><svg class="w-[26px] h-[24px]" viewBox="0 0 26 24"><path d="M0 3 14 0v22L0 19z" fill="#1284c4"/><text x="4" y="16" fill="#fff" font-size="13" font-weight="bold" font-family="Open Sans">L</text><circle cx="19" cy="12" r="4.500" fill="none" stroke="#fff" stroke-width="2.500"/><path d="M15.500 4v8" stroke="#fff" stroke-width="2"/><rect x="16" y="19" width="10" height="4" rx="2" fill="#c8202c"/></svg></div>
            <div class="ml-[3px] w-[42px] h-full bg-[#a0a3a6] flex items-center justify-center"><div class="w-[27px] h-[25px] bg-[#42c4d2] flex flex-col items-center justify-center"><svg class="w-[14px] h-[14px]" viewBox="0 0 14 14" fill="none" stroke="#8b9da2" stroke-width="1.800"><path d="M12 2Q4 1 4 9v4"/></svg><div class="h-[2px] w-[18px] bg-[#7b9aa0]"></div></div></div>

            <!-- Notification area -->
            <div class="ml-auto w-[7px] h-[24px] border-x-2 border-dotted border-[#555]"></div>
            <div class="ml-[7px] w-[17px] text-[10px]">NL</div>
            <div class="w-[12px] h-[12px] rounded-full bg-[#3558c8] border border-[#a8b8ec] text-[9px] leading-[10px] font-bold text-center -mt-[5px]">?</div>
            <svg class="w-[6px] h-[14px] ml-[7px] mr-[7px] -mt-[5px]" viewBox="0 0 6 14" fill="none" stroke="#fff"><path d="M2 1h3.500v2M.5 2.500H4v2H.5z"/><path d="M1 11h4L3 13.500z" fill="#fff" stroke="none"/></svg>
            <div class="flex items-center gap-[6.800px]">
                <svg class="w-[13px] h-[13px]" viewBox="0 0 13 13"><path d="M0 1 8 0v11L0 10z" fill="#1c96d0"/><path d="M3 3v5h3" stroke="#fff" fill="none" stroke-width="1.300"/><circle cx="9.500" cy="9" r="2.500" stroke="#fff" stroke-width="1.500" fill="#1c96d0"/></svg>
                <svg class="w-[13px] h-[13px]" viewBox="0 0 13 13"><rect width="12" height="12" x=".5" y=".5" rx="1" fill="#6ba82c"/><path d="M2 9q0-4 3-4t3 4M6 4q4-2 5 2" stroke="#dff0c0" fill="none"/></svg>
                <svg class="w-[13px] h-[13px]" viewBox="0 0 13 13"><path d="M0 0h13v13H0z" fill="#3fbac8"/><g fill="none" stroke="#fff" stroke-width="1.300"><circle cx="6.500" cy="4.500" r="1.800"/><circle cx="6.500" cy="8.500" r="2.200"/></g></svg>
                <svg class="w-[13px] h-[13px]" viewBox="0 0 13 13"><circle cx="5" cy="5" r="4.500" fill="#6f857b"/><circle cx="9" cy="9" r="3.500" fill="#c88a9a"/><path d="m7.500 7.500 3 3M10.500 7.500l-3 3" stroke="#fff"/></svg>
                <svg class="w-[13px] h-[13px]" viewBox="0 0 13 13"><path d="M1 12V7l4-3 5 4-2 4z" fill="#d8dccc"/><circle cx="9" cy="4.500" r="4" fill="#78a848"/><path d="m7 4.500 1.500 1.500L11 3" stroke="#fff" fill="none"/></svg>
                <svg class="w-[13px] h-[13px]" viewBox="0 0 13 13"><path d="M0 0h13v13H0z" fill="#6a9a3c"/><path d="M6.500 2v9M2 6.500h9" stroke="#e0f0c8" stroke-width="3"/></svg>
                <svg class="w-[13px] h-[13px]" viewBox="0 0 13 13"><circle cx="6" cy="6" r="5" fill="#e6d6da" stroke="#a83548" stroke-width="1.500"/><circle cx="9" cy="8.500" r="3.500" fill="#c02638"/><path d="M7 8.500h4" stroke="#fff"/></svg>
                <svg class="w-[13px] h-[13px]" viewBox="0 0 13 13"><path d="M1 1h7v11H1z" fill="#bcd0dc"/><path d="M1 4h7M1 7h7" stroke="#6888a0"/><path d="M6 6h6v5H6z" fill="#d8a468"/></svg>
                <svg class="w-[13px] h-[13px]" viewBox="0 0 13 13"><circle cx="6.500" cy="6.500" r="6" fill="#285e9e"/><path d="M9.500 4A4 4 0 1 0 10 8" stroke="#fff" stroke-width="1.800" fill="none"/></svg>
                <svg class="w-[13px] h-[13px]" viewBox="0 0 13 13"><path d="M0 0h13v13H0z" fill="#b01218"/><path d="M2 11q4-3 4.500-9 1 6 5 6-6 0-9.500 3" stroke="#fff" fill="none"/></svg>
                <svg class="w-[13px] h-[13px]" viewBox="0 0 13 13"><circle cx="6.500" cy="6.500" r="5.500" fill="#ecc47c"/><circle cx="5.500" cy="5" r="2.500" fill="#f8e2b0"/></svg>
                <svg class="w-[13px] h-[13px]" viewBox="0 0 13 13"><path d="M0 0h13v13H0z" fill="#b41850"/><path d="M3.500 9q0-5 6.500-7 0 8-4 9-2 0-2.500-2zL8 5" stroke="#fff" fill="none" stroke-width="1.200"/></svg>
                <svg class="w-[13px] h-[13px]" viewBox="0 0 13 13"><rect x=".5" width="12" height="13" rx="1" fill="#dc6420"/><path d="M3 9.500h7M4 8l2.500-5L9 8z" stroke="#fbe0c8" fill="none"/></svg>
                <svg class="w-[13px] h-[13px]" viewBox="0 0 13 13"><circle cx="4" cy="7" r="3.500" fill="#3c9cbc"/><circle cx="9.500" cy="5" r="3" fill="#4cc4dc"/><circle cx="4" cy="7" r="1.300" fill="#d0f0f4"/></svg>
                <svg class="w-[13px] h-[13px]" viewBox="0 0 13 13"><rect y="3" width="13" height="6" rx="1" fill="#a8b8a8"/><path d="M5 8h6l-3 4z" fill="#5cb04c"/></svg>
                <svg class="w-[13px] h-[13px]" viewBox="0 0 13 13"><path d="M2 1v12" stroke="#fff"/><path d="M3 2h5v1.500h4l-1 2 1 2H7V6H3z" fill="#fff"/></svg>
                <svg class="w-[13px] h-[13px]" viewBox="0 0 13 13"><path d="M0 0h13v13H0z" fill="#c8e4ee"/><path d="m3 3 7 7" stroke="#2878a8" stroke-width="2.500"/></svg>
                <svg class="w-[13px] h-[13px]" viewBox="0 0 13 13" fill="none" stroke="#fff"><path d="M1 2h6v10H1z"/><path d="M3 4v6M5 4v6M8 5h4v2h-4M10 2v3M10 7v5"/></svg>
                <svg class="w-[13px] h-[13px]" viewBox="0 0 13 13" fill="none" stroke="#fff"><path d="M4 4h8.500v6H4zM1 1h3v3H1zM2.500 4v8H10"/></svg>
                <svg class="w-[13px] h-[13px]" viewBox="0 0 13 13" fill="none" stroke="#fff"><path d="M1 5h2l3-3v9L3 8H1z" fill="#fff"/><path d="M8 4q1.500 2.500 0 5M10 3q2.500 3.500 0 7"/></svg>
            </div>
            <div class="ml-[9px] w-[54px] text-center text-[10px] leading-[14px] pt-[1px] tracking-[-0.300px]">15:51<br>23/12/2014</div>
            <div class="ml-[5px] w-[7px] h-full border border-[#77777c] bg-[#46464c]"></div>
        </div>
    </div>

    <!-- Presenting bar -->
    <div class="absolute left-[268px] top-0 w-[743px] h-[33px] rounded-b-[3px] bg-[#fdfdfd] border-b border-[#d8d8d8] flex items-center pt-[3px] text-[#222]">
        <div class="ml-[9px] h-[12px] border-l-2 border-dotted border-[#555]"></div>
        <div class="ml-[9px] w-[94px] text-[9.500px] tracking-[-0.650px]">Presenteert momenteel</div>
        <div class="w-[114px] h-[20px] border border-[#b4b4b4] flex items-center pl-[5px] gap-[4px] text-[10.200px] tracking-[-0.400px]">Besturing overgeven<svg class="w-[6px] h-[4px]" viewBox="0 0 6 4"><path d="M0 0h6L3 4z" fill="#222"/></svg></div>
        <div class="ml-auto w-[6px] h-[6px] rounded-full bg-[#b80c2c]"></div>
        <div class="ml-[11px] w-[116px] h-[20px] border border-[#b4b4b4] flex items-center pl-[6px] gap-[4px] text-[10.200px] tracking-[-0.550px]"><svg class="w-[9px] h-[9px]" viewBox="0 0 9 9" stroke="#b02838" stroke-width="2.400"><path d="m1 1 7 7M8 1 1 8"/></svg>Presenteren stoppen</div>
        <svg class="w-[8px] h-[14px] ml-[9px] mr-[10px]" viewBox="0 0 8 14" fill="#3080b0"><path d="M1 0h6v1.500H6V6l2 2.500H0L2 6V1.500H1zM3.500 8.500h1V14h-1z"/></svg>
    </div>
</body>
</html>
